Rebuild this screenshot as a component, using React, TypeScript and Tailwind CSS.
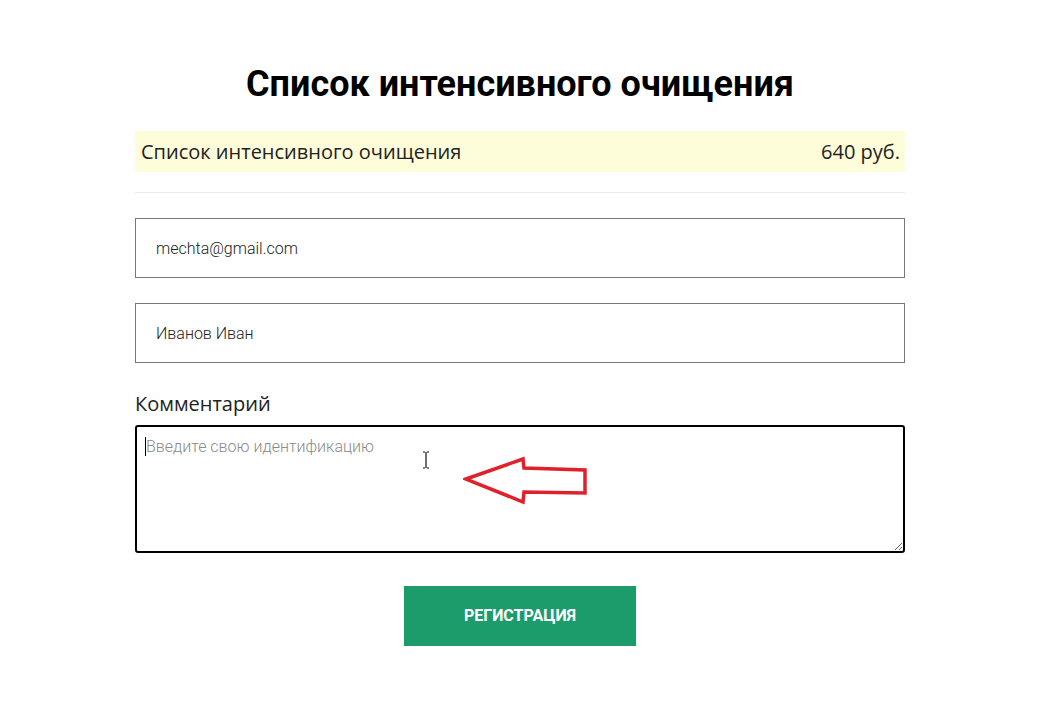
import React from 'react';

const Arrow: React.FC = () => (
  <svg width="130" height="52" viewBox="0 0 130 52" className="absolute left-[328px] top-[30px]">
    <path
      d="M3 24 L60 4 L61 13 L122 15 L122 38 L61 37 L60 47 Z"
      fill="none"
      stroke="#e0202a"
      strokeWidth="3.5"
      strokeLinejoin="miter"
    />
  </svg>
);

const IBeam: React.FC = () => (
  <svg width="10" height="18" viewBox="0 0 10 18" className="absolute left-[286px] top-[26px]">
    <path d="M2 1 H4 M6 1 H8 M5 1 V17 M2 17 H4 M6 17 H8" stroke="#111" strokeWidth="1.2" fill="none" />
  </svg>
);

export default function App() {
  return (
    <div className="min-h-[711px] w-full bg-white font-['Open_Sans',sans-serif]">
      <div className="ml-[135px] w-[770px] pt-[61px]">
        <h1 className="text-center font-['Roboto',sans-serif] text-[36px] font-bold leading-[46px] text-black">
          Список интенсивного очищения
        </h1>

        {/* Order row */}
        <div className="mt-[24px] flex h-[41px] items-center justify-between bg-[#fefdd9] pl-[6px] pr-[5px] text-[20px] text-[#222]">
          <span>Список интенсивного очищения</span>
          <span>640 руб.</span>
        </div>
        <div className="mt-[20px] h-px bg-[#ececec]" />

        {/* Fields */}
        <div className="mt-[25px] flex flex-col gap-[25px]">
          <input
            type="text"
            defaultValue="mechta@gmail.com"
            className="h-[60px] w-full border border-[#767676] bg-white px-[20px] font-['Roboto',sans-serif] text-[16px] font-light text-[#222] outline-none"
          />
          <input
            type="text"
            defaultValue="Иванов Иван"
            className="h-[60px] w-full border border-[#767676] bg-white px-[20px] font-['Roboto',sans-serif] text-[16px] font-light text-[#222] outline-none"
          />
        </div>

        <label className="mt-[28px] block text-[20px] leading-[26px] text-[#222]">Комментарий</label>
        <div className="relative mt-[8px] h-[128px]">
          <textarea
            placeholder="Введите свою идентификацию"
            className="block h-[128px] w-full resize-y rounded-[3px] border-2 border-black bg-white px-[9px] py-[8px] font-['Roboto',sans-serif] text-[16px] font-light text-[#333] placeholder-[#8a8a8a] outline-none"
          />
          <span className="absolute left-[10px] top-[12px] h-[19px] w-px bg-black" />
          <IBeam />
          <Arrow />
        </div>

        <div className="mt-[33px] flex justify-center">
          <button className="h-[60px] w-[232px] bg-[#1c9b6b] font-['Roboto',sans-serif] text-[16px] font-bold uppercase text-white">
            Регистрация
          </button>
        </div>
      </div>
    </div>
  );
}
